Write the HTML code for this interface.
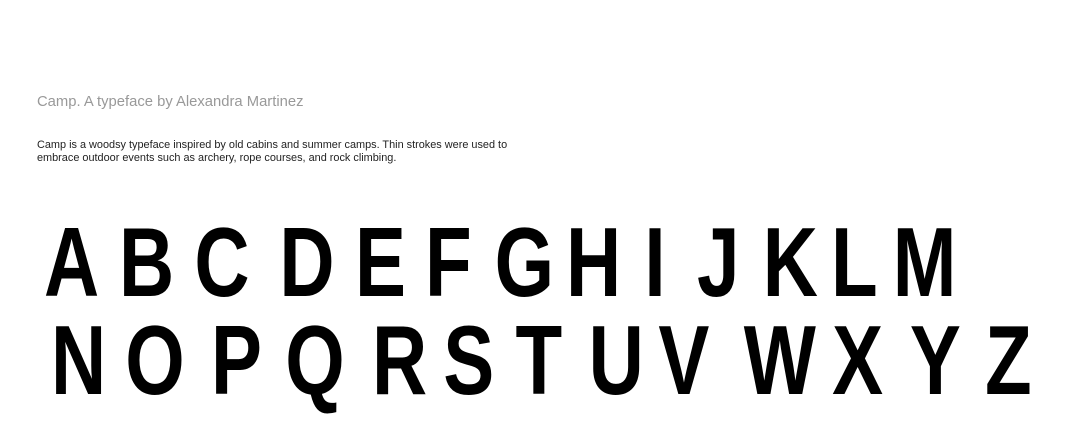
<!DOCTYPE html>
<html><head><style>
body{margin:0;width:1080px;height:432px;background:#fff;position:relative;overflow:hidden;font-family:"Liberation Sans",sans-serif}
.t{position:absolute;left:37px;top:94px;font-size:14.8px;color:#999;white-space:nowrap}
.p{position:absolute;left:37px;top:139px;font-size:10.9px;line-height:12.5px;color:#222;white-space:nowrap}
.l{position:absolute;font-weight:bold;font-size:98px;line-height:96px;height:96px;text-align:center;color:#000;transform:scaleX(0.78)}
</style></head><body>
<div class="t">Camp. A typeface by Alexandra Martinez</div>
<div class="p">Camp is a woodsy typeface inspired by old cabins and summer camps. Thin strokes were used to<br>embrace outdoor events such as archery, rope courses, and rock climbing.</div>
<div class="l" style="left:38px;width:54px;top:214px">A</div>
<div class="l" style="left:113px;width:54px;top:214px">B</div>
<div class="l" style="left:188px;width:58px;top:214px">C</div>
<div class="l" style="left:273px;width:58px;top:214px">D</div>
<div class="l" style="left:350px;width:45px;top:214px">E</div>
<div class="l" style="left:420px;width:45px;top:214px">F</div>
<div class="l" style="left:488px;width:60px;top:214px">G</div>
<div class="l" style="left:560px;width:55px;top:214px">H</div>
<div class="l" style="left:640px;width:30px;top:214px">I</div>
<div class="l" style="left:692px;width:45px;top:214px">J</div>
<div class="l" style="left:757px;width:52px;top:214px">K</div>
<div class="l" style="left:826px;width:45px;top:214px">L</div>
<div class="l" style="left:885px;width:70px;top:214px">M</div>
<div class="l" style="left:45px;width:55px;top:312px">N</div>
<div class="l" style="left:115px;width:80px;top:312px">O</div>
<div class="l" style="left:205px;width:55px;top:312px">P</div>
<div class="l" style="left:275px;width:80px;top:312px">Q</div>
<div class="l" style="left:366px;width:55px;top:312px">R</div>
<div class="l" style="left:438px;width:48px;top:312px">S</div>
<div class="l" style="left:510px;width:50px;top:312px">T</div>
<div class="l" style="left:582px;width:60px;top:312px">U</div>
<div class="l" style="left:652px;width:58px;top:312px">V</div>
<div class="l" style="left:735px;width:80px;top:312px">W</div>
<div class="l" style="left:825px;width:65px;top:312px">X</div>
<div class="l" style="left:903px;width:62px;top:312px">Y</div>
<div class="l" style="left:980px;width:45px;top:312px">Z</div>
</body></html>
